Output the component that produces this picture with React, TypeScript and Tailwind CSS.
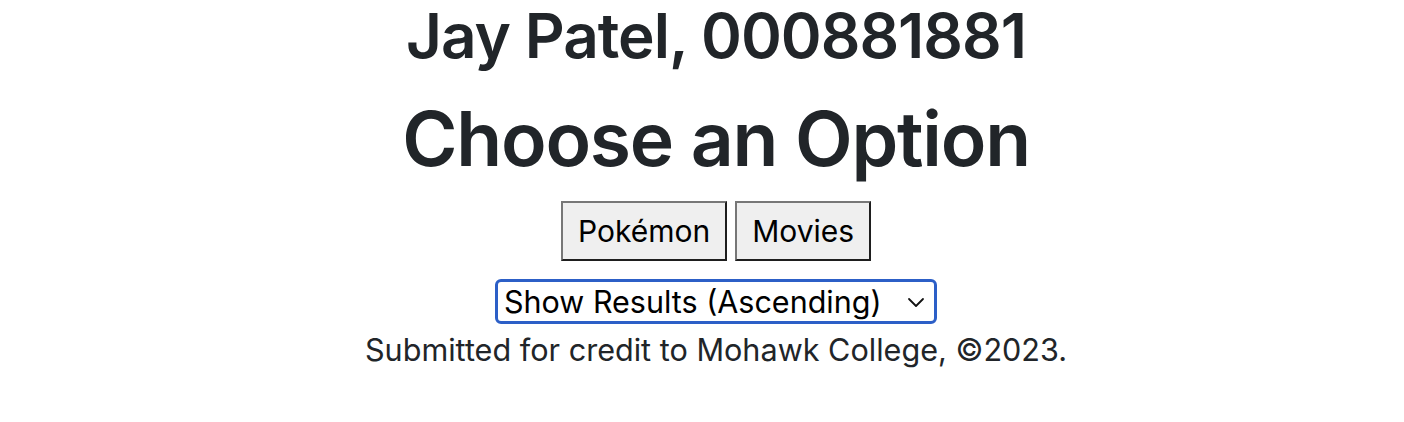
import * as React from "react"

const font = { fontFamily: "Inter, 'Noto Sans', sans-serif" }

export default function App() {
  const [choice, setChoice] = React.useState("asc")

  return (
    <div
      className="flex min-h-[422px] w-full flex-col items-center bg-white pl-[28px] text-[#212529]"
      style={font}
    >
      <h1 className="mt-0 text-[62px] font-semibold leading-[72px] tracking-[-1px]">
        Jay Patel, 000881881
      </h1>
      <h2 className="mt-[25px] text-[75px] font-semibold leading-[84px] tracking-[-1.2px]">
        Choose an Option
      </h2>
      <div className="mt-[20px] flex gap-[8px]">
        <NavButton label="Pokémon" />
        <NavButton label="Movies" />
      </div>
      <div className="relative mt-[18px]">
        <select
          value={choice}
          onChange={(e) => setChoice(e.target.value)}
          className="h-[45px] w-[442px] appearance-none rounded-[6px] border-[3px] border-[#2c5fc7] bg-white py-0 pl-[6px] text-[30.5px] leading-[37px] text-black outline-none"
          style={font}
        >
          <option value="asc">Show Results (Ascending)</option>
          <option value="desc">Show Results (Descending)</option>
        </select>
        <svg
          className="pointer-events-none absolute right-[12px] top-[17px] h-[12px] w-[18px]"
          viewBox="0 0 18 12"
          fill="none"
          stroke="#111"
          strokeWidth={1.8}
          strokeLinecap="round"
          strokeLinejoin="round"
          aria-hidden
        >
          <path d="M2 3l7 7 7-7" />
        </svg>
      </div>
      <p className="mt-[4px] text-[30.6px] leading-[44px]">
        Submitted for credit to Mohawk College, ©2023.
      </p>
    </div>
  )
}

function NavButton({ label }: { label: string }) {
  return (
    <button
      type="button"
      className="h-[60px] border-2 border-b-[#1e1e1e] border-l-[#777777] border-r-[#1e1e1e] border-t-[#777777] bg-[#efefef] px-[15px] text-[30px] leading-none text-black"
      style={font}
    >
      {label}
    </button>
  )
}
